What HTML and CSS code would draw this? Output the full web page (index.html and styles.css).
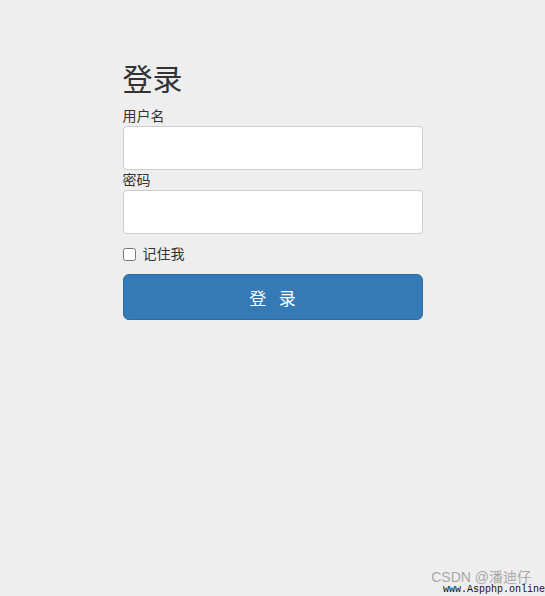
FILE: index.html
```html
<!DOCTYPE html>
<html lang="zh-CN">
<head>
<meta charset="UTF-8">
<title>登录</title>
<link rel="stylesheet" href="styles.css">
</head>
<body>

<div class="container">
    <form class="form-signin">
        <h2 class="form-signin-heading">登录</h2>
        <label class="field-label" for="username">用户名</label>
        <input type="text" id="username" class="form-control">
        <label class="field-label" for="password">密码</label>
        <input type="password" id="password" class="form-control">
        <div class="checkbox">
            <label><input type="checkbox" value="remember-me"> 记住我</label>
        </div>
        <button class="btn-login" type="submit">登 录</button>
    </form>
</div>

<div class="watermark">
    <span class="wm-csdn">CSDN @潘迪仔</span>
    <span class="wm-site">www.Aspphp.online</span>
</div>

</body>
</html>
```

FILE: styles.css
```css
html, body {
    height: 100%;
}

body {
    margin: 0;
    background-color: #eee;
    color: #333;
    font-family: "Liberation Sans", "Noto Sans CJK SC", sans-serif;
    font-size: 14px;
    line-height: 20px;
    position: relative;
    overflow: hidden;
}

.container {
    padding-top: 63px;
}

.form-signin {
    width: 300px;
    margin: 0 auto;
}

.form-signin-heading {
    margin: 0 0 10px;
    font-size: 30px;
    line-height: 33px;
    font-weight: 400;
}

.field-label {
    display: block;
    line-height: 20px;
}

.form-control {
    display: block;
    box-sizing: border-box;
    width: 100%;
    height: 44px;
    margin: 0;
    padding: 10px;
    background-color: #fff;
    border: 1px solid #ccc;
    border-radius: 4px;
    font-size: 16px;
}

.checkbox {
    margin: 10px 0;
}

.checkbox label {
    display: flex;
    align-items: center;
    gap: 7px;
}

.checkbox input {
    width: 13px;
    height: 13px;
    margin: 0;
}

.btn-login {
    display: block;
    box-sizing: border-box;
    width: 100%;
    height: 46px;
    padding: 0 0 0 4px;
    background-color: #337ab7;
    border: 1px solid #2e6da4;
    border-radius: 6px;
    color: #fff;
    font-family: "Liberation Sans", "Noto Sans CJK SC", sans-serif;
    font-size: 17px;
    letter-spacing: 4px;
    cursor: pointer;
}

.watermark {
    position: absolute;
    right: 0;
    bottom: 1px;
    display: flex;
    flex-direction: column;
    align-items: flex-end;
}

.wm-csdn {
    margin-right: 14px;
    color: #a8a8a8;
    font-size: 14px;
    line-height: 15px;
}

.wm-site {
    color: #111;
    font-family: "Liberation Mono", monospace;
    font-size: 10px;
    line-height: 10px;
}
```
